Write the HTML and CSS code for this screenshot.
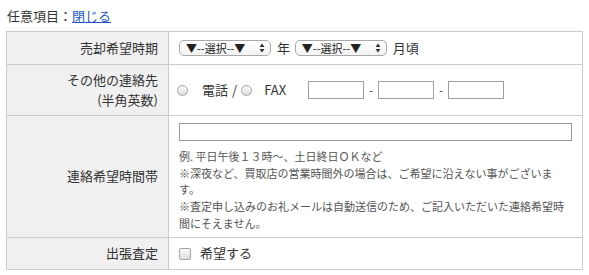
FILE: index.html
```html
<!DOCTYPE html>
<html lang="ja">
<head>
    <meta charset="UTF-8">
    <meta name="viewport" content="width=device-width, initial-scale=1.0">
    <title>任意項目</title>
    <link rel="stylesheet" href="styles.css">
</head>
<body>
    <p class="optionTitle">任意項目：<a href="#" class="closeLink">閉じる</a></p>
    <table class="formTable">
        <tr class="rowSale">
            <th>売却希望時期</th>
            <td>
                <span class="selectBox">
                    <select>
                        <option>▼--選択--▼</option>
                    </select>
                    <svg class="selectArrows" width="6" height="10" viewBox="0 0 6 10"><path d="M3 0.5 L5.5 4 H0.5 Z M3 9.5 L5.5 6 H0.5 Z" fill="#333"/></svg>
                </span>
                <span class="unit">年</span>
                <span class="selectBox">
                    <select>
                        <option>▼--選択--▼</option>
                    </select>
                    <svg class="selectArrows" width="6" height="10" viewBox="0 0 6 10"><path d="M3 0.5 L5.5 4 H0.5 Z M3 9.5 L5.5 6 H0.5 Z" fill="#333"/></svg>
                </span>
                <span class="unit">月頃</span>
            </td>
        </tr>
        <tr class="rowContact">
            <th>その他の連絡先<br>(半角英数)</th>
            <td>
                <div class="contactLine">
                    <label class="radioLabel"><input type="radio" name="contact" class="radioFirst">電話</label>
                    <span class="slash">/</span>
                    <label class="radioLabel"><input type="radio" name="contact" class="radioSecond">FAX</label>
                    <span class="telGroup">
                        <input type="text" class="telInput"><span class="dash">-</span><input type="text" class="telInput"><span class="dash">-</span><input type="text" class="telInput">
                    </span>
                </div>
            </td>
        </tr>
        <tr class="rowTime">
            <th>連絡希望時間帯</th>
            <td>
                <input type="text" class="timeInput">
                <p class="hint">例. 平日午後１３時〜、土日終日ＯＫなど<br>※深夜など、買取店の営業時間外の場合は、ご希望に沿えない事がございます。<br>※査定申し込みのお礼メールは自動送信のため、ご記入いただいた連絡希望時間にそえません。</p>
            </td>
        </tr>
        <tr class="rowVisit">
            <th>出張査定</th>
            <td>
                <label class="checkLabel"><input type="checkbox">希望する</label>
            </td>
        </tr>
    </table>
</body>
</html>
```

FILE: styles.css
```css
body {
    margin: 6px;
    font-family: "Noto Sans CJK JP", "Noto Sans", sans-serif;
    font-size: 13px;
    color: #333;
}
.optionTitle {
    margin: 0 0 5px 1px;
    line-height: 20px;
}
.closeLink {
    color: #2358c4;
}
.formTable {
    width: 100%;
    border-collapse: collapse;
    border: 1px solid #ccc;
}
.formTable th,
.formTable td {
    border: 1px solid #ccc;
    padding: 6px 10px;
    line-height: 20px;
    vertical-align: middle;
}
.formTable th {
    width: 141px;
    background-color: #f0f0f0;
    font-weight: normal;
    text-align: right;
}
.rowContact th {
    padding-top: 5px;
    padding-bottom: 5px;
}
.rowTime td {
    padding-top: 6px;
    padding-bottom: 5px;
}
.rowVisit td,
.rowVisit th {
    padding-top: 5px;
    padding-bottom: 6px;
}
.selectBox {
    position: relative;
    display: inline-block;
    vertical-align: middle;
    margin-top: -2px;
}
.selectBox select {
    appearance: none;
    -webkit-appearance: none;
    width: 92px;
    height: 16px;
    margin: 0;
    padding: 0 0 0 6px;
    border: 1px solid #a9a9a9;
    border-radius: 5px;
    background: linear-gradient(#ffffff, #f3f3f3);
    font-family: "Noto Sans CJK JP", sans-serif;
    font-size: 11px;
    line-height: 14px;
    color: #222;
    display: block;
}
.selectArrows {
    position: absolute;
    right: 6px;
    top: 3px;
}
.unit {
    margin: 0 2px 0 3px;
}
.contactLine {
    display: flex;
    align-items: center;
    height: 20px;
}
.radioLabel {
    display: inline-flex;
    align-items: center;
}
.radioLabel input,
.checkLabel input {
    appearance: none;
    -webkit-appearance: none;
    width: 11px;
    height: 11px;
    margin: 0;
    border: 1px solid #a6a6a6;
    background: linear-gradient(#fbfbfb, #dcdcdc);
}
.radioLabel input {
    border-radius: 50%;
}
.radioFirst {
    margin-left: -2px !important;
    margin-right: 14px !important;
}
.radioSecond {
    margin-right: 12px !important;
}
.slash {
    margin: 0 4px 0 4px;
}
.telGroup {
    display: inline-flex;
    align-items: center;
    margin-left: 22px;
}
.telInput {
    width: 54px;
    height: 16px;
    padding: 0;
    margin: 0;
    border: 1px solid #a0a0a0;
}
.dash {
    width: 14px;
    text-align: center;
    font-size: 11px;
}
.timeInput {
    display: block;
    box-sizing: border-box;
    width: 100%;
    height: 18px;
    margin: 1px 0 0 0;
    padding: 0 4px;
    border: 1px solid #999;
}
.hint {
    margin: 7px 0 0 0;
    font-size: 11px;
    line-height: 16.7px;
    color: #555;
}
.checkLabel input {
    border-radius: 2px;
    width: 12px;
    height: 12px;
    margin-right: 9px;
    vertical-align: -2px;
}
```
